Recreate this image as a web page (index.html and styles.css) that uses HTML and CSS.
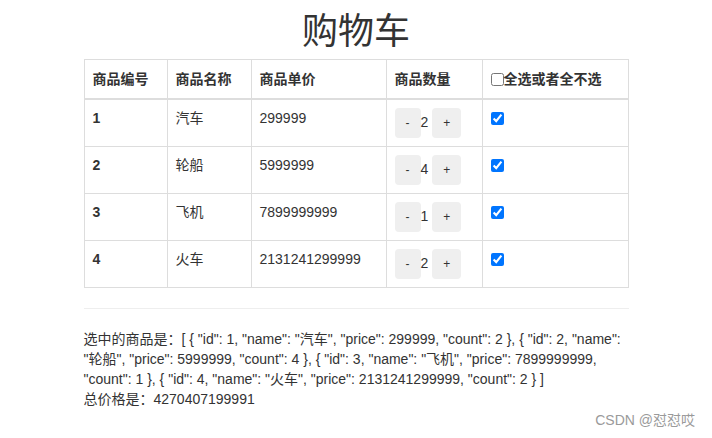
FILE: index.html
```html
<!DOCTYPE html>
<html lang="zh">
<head>
<meta charset="utf-8">
<title>购物车</title>
<link rel="stylesheet" href="styles.css">
</head>
<body>
<div class="container">
  <h1 class="title">购物车</h1>
  <table class="cart">
    <thead>
      <tr>
        <th class="c-id">商品编号</th>
        <th class="c-name">商品名称</th>
        <th class="c-price">商品单价</th>
        <th class="c-count">商品数量</th>
        <th class="c-check"><input type="checkbox" class="check">全选或者全不选</th>
      </tr>
    </thead>
    <tbody>
      <tr>
        <td class="num">1</td><td>汽车</td><td>299999</td>
        <td><button class="btn">-</button>2 <button class="btn">+</button></td>
        <td><input type="checkbox" class="check" checked></td>
      </tr>
      <tr>
        <td class="num">2</td><td>轮船</td><td>5999999</td>
        <td><button class="btn">-</button>4 <button class="btn">+</button></td>
        <td><input type="checkbox" class="check" checked></td>
      </tr>
      <tr>
        <td class="num">3</td><td>飞机</td><td>7899999999</td>
        <td><button class="btn">-</button>1 <button class="btn">+</button></td>
        <td><input type="checkbox" class="check" checked></td>
      </tr>
      <tr>
        <td class="num">4</td><td>火车</td><td>2131241299999</td>
        <td><button class="btn">-</button>2 <button class="btn">+</button></td>
        <td><input type="checkbox" class="check" checked></td>
      </tr>
    </tbody>
  </table>
  <hr class="rule">
  <p class="summary">选中的商品是：[ { "id": 1, "name": "汽车", "price": 299999, "count": 2 }, { "id": 2, "name": "轮船", "price": 5999999, "count": 4 }, { "id": 3, "name": "飞机", "price": 7899999999, "count": 1 }, { "id": 4, "name": "火车", "price": 2131241299999, "count": 2 } ]</p>
  <p class="summary">总价格是：4270407199991</p>
</div>
<div class="watermark">CSDN @怼怼哎</div>
</body>
</html>
```
FILE: styles.css
```css
* { box-sizing: border-box; }
html, body { margin: 0; padding: 0; }
body {
  font-family: "Liberation Sans", Arial, "Noto Sans CJK SC", sans-serif;
  font-size: 14px;
  line-height: 20px;
  color: #333;
  background: #fff;
}
.container {
  width: 545px;
  margin: 0 auto;
}
.title {
  margin: 0;
  height: 59px;
  padding-top: 8px;
  font-family: "Noto Sans CJK SC", sans-serif;
  font-size: 36px;
  font-weight: normal;
  line-height: 40px;
  text-align: center;
}
.cart {
  width: 545px;
  border-collapse: collapse;
  border: 1px solid #ddd;
  margin-bottom: 20px;
}
.cart th, .cart td {
  border: 1px solid #ddd;
  padding: 8px;
  text-align: left;
  vertical-align: top;
  line-height: 20px;
  font-family: "Liberation Sans", Arial, "Noto Sans CJK SC", sans-serif;
}
.cart th {
  font-weight: bold;
  padding: 9px 8px;
  border-bottom-width: 2px;
  vertical-align: bottom;
}
.c-id { width: 83px; }
.c-name { width: 84px; }
.c-price { width: 135px; }
.c-count { width: 96px; }
.num { font-weight: bold; }
.btn {
  display: inline-block;
  height: 30px;
  padding: 5px 10px;
  font-family: "Liberation Sans", Arial, sans-serif;
  font-size: 12px;
  line-height: 18px;
  color: #333;
  background: #efefef;
  border: 1px solid transparent;
  border-radius: 4px;
  vertical-align: middle;
  margin: 0;
}
.check {
  width: 13px;
  height: 13px;
  margin: 4px 0 0 0;
  vertical-align: top;
  accent-color: #0075ff;
}
.rule {
  margin: 0 0 20px 0;
  border: 0;
  border-top: 1px solid #eee;
}
.summary {
  margin: 0;
  width: 545px;
}
.watermark {
  position: absolute;
  right: 17px;
  top: 410px;
  font-family: "Liberation Sans", Arial, "Noto Sans CJK SC", sans-serif;
  font-size: 14px;
  line-height: 20px;
  color: #9a9a9a;
}
```
